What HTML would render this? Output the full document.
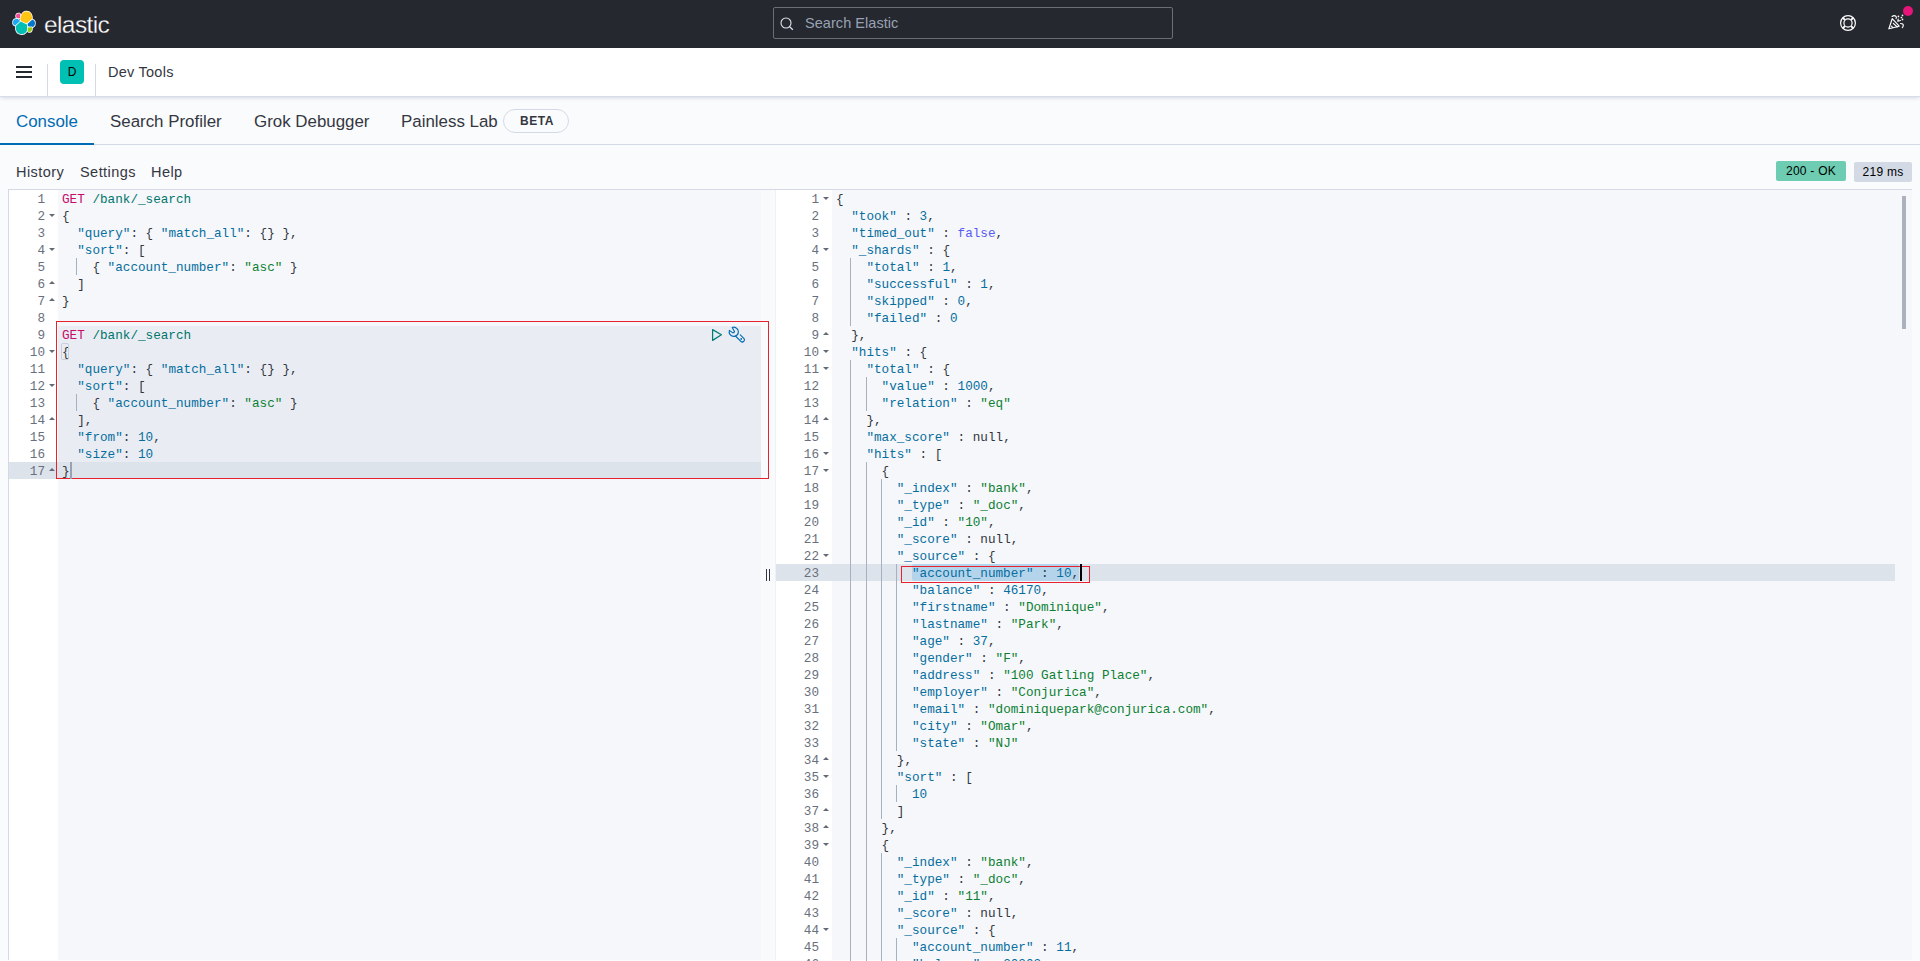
<!DOCTYPE html>
<html><head><meta charset="utf-8">
<style>
*{box-sizing:border-box;margin:0;padding:0}
html,body{width:1920px;height:961px;overflow:hidden;background:#fafbfd;font-family:"Liberation Sans",sans-serif;color:#343741;position:relative}
.abs{position:absolute}
#hdr{position:absolute;left:0;top:0;width:1920px;height:48px;background:#25282f}
#logo-text{position:absolute;left:44px;top:10.5px;font-size:24.5px;line-height:28px;color:#fff;letter-spacing:-0.6px;-webkit-text-stroke:0.3px #25282f}
#search{position:absolute;left:773px;top:7px;width:400px;height:32px;border:1px solid #6a6e75;border-radius:2px;background:#25282f}
#search span{position:absolute;left:31px;top:7px;font-size:14.5px;line-height:16px;letter-spacing:0.05px;color:#98a2b3}
#nav{position:absolute;left:0;top:48px;width:1920px;height:48px;background:#fff;box-shadow:0 1px 0 #d6dce8,0 3px 4px -1px rgba(152,162,179,.4)}
.vsep{position:absolute;top:64px;width:1px;height:32px;background:#d3dae6}
.tab{position:absolute;top:111.6px;font-size:16.9px;line-height:19px;color:#343741;white-space:nowrap}
#tabline{position:absolute;left:0;top:144px;width:1920px;height:1px;background:#d3dae6}
#tabsel{position:absolute;left:0;top:143px;width:94px;height:2px;background:#006bb4}
.tb{position:absolute;top:164px;font-size:14.5px;line-height:16px;color:#343741;white-space:nowrap;letter-spacing:0.45px}
#tbline{position:absolute;left:8px;top:189px;width:1904px;height:1px;background:#d3dae6}
.badge{position:absolute;font-size:12px;line-height:14px;color:#000;white-space:nowrap;text-align:center;border-radius:2px;letter-spacing:0.25px}
.ed{font-family:"Liberation Mono",monospace;font-size:12.667px;line-height:17px}
.ed div{position:absolute}
.gut{background:#fff}
.cbg{background:#f5f7fa}
.blk{background:#e9edf3}
.act{background:#dde3eb}
.ln{text-align:right;color:#69707d;white-space:pre;height:17px;padding-top:1px}
.sel{background:#b4d4ec;border-radius:2px}
.code{white-space:pre;color:#343741;height:17px;padding-top:1px}
.ig{width:1px;height:17px;background:#a7b0be}
.fold{width:0;height:0;border-left:3px solid transparent;border-right:3px solid transparent}
.fold.d{border-top:3px solid #646a75}
.fold.u{border-bottom:3px solid #646a75}
.m{color:#c80a68}.u{color:#00756c}.k{color:#066e9e}.s{color:#0d7f33}.n{color:#066e9e}.p{color:#343741}.o{color:#343741}.c{color:#585cf6}.nl{color:#343741}
</style></head><body>
<div id="hdr">
  <svg class="abs" style="left:8px;top:8px" width="32" height="32" viewBox="0 0 32 32">
    <g stroke="#fff" stroke-width="1.5" stroke-linejoin="round" paint-order="stroke">
    <path fill="#f04e98" d="M8.2 7 C8.6 5.6 10 5.2 11.6 5.6 L12.3 6.2 L12.4 10 L9.5 10.6 C8.2 10 7.9 8.4 8.2 7Z"/>
    <path fill="#fec514" d="M12.4 13.3 C12.2 9 13.8 4 18.3 3.6 C22 3.4 24.3 6.2 24.1 11.7 L18.7 15.7 Z"/>
    <path fill="#1ba9f5" d="M5 14 C5.2 11.5 7.2 10.7 9.5 10.8 L12.4 13.3 L7.6 17.7 C5.8 17.4 4.8 16 5 14Z"/>
    <path fill="#0077cc" d="M18.9 16.4 L24.1 11.8 C25.8 11.9 27.1 13.4 27 15.4 C26.9 17.8 25.4 19.1 23.6 19.1 C21.6 19.1 19.9 18.1 18.9 16.4Z"/>
    <path fill="#00bfb3" d="M7.8 18 L12.6 13.6 L18.9 16.4 C19.5 19 19.6 22.2 18.2 24 C16.5 26.2 13.5 26.6 11 25.6 C8.4 24.5 7.5 21 7.8 18Z"/>
    <path fill="#93c90e" d="M19.8 19.4 L24 19.3 C24.4 21.8 23.6 23.9 21.6 24.1 C20.5 24.2 19.7 23.4 19.7 22.3Z"/>
    </g>
  </svg>
  <div id="logo-text">elastic</div>
  <div id="search"><svg class="abs" style="left:6px;top:9px" width="14" height="14" viewBox="0 0 14 14"><circle cx="6" cy="6" r="5" fill="none" stroke="#dfe5ef" stroke-width="1.1"/><path d="M9.6 9.6 L12.8 12.8" stroke="#dfe5ef" stroke-width="1.3"/></svg><span>Search Elastic</span></div>
  <svg class="abs" style="left:1839px;top:14px" width="18" height="18" viewBox="0 0 18 18" fill="none" stroke="#fff" stroke-width="1.2">
    <circle cx="9" cy="9" r="7.4"/><circle cx="9" cy="9" r="4.1"/>
    <path stroke-width="1.9" d="M5.9 5.9 L3.9 3.9 M12.1 5.9 L14.1 3.9 M5.9 12.1 L3.9 14.1 M12.1 12.1 L14.1 14.1"/>
  </svg>
  <svg class="abs" style="left:1884px;top:12px" width="24" height="22" viewBox="0 0 24 22" fill="none" stroke="#fff" stroke-width="1.15" stroke-linecap="round" stroke-linejoin="round">
    <path d="M8.2 6.7 L15.2 14.2 L4.9 16.8 Z"/>
    <path d="M9.3 11.3 L13.3 15 M7.5 14.1 L8.6 15.4"/>
    <path d="M8.1 4.5 Q10.2 2.6 12 4.4 Q12.7 5.4 12.1 6.6"/>
    <path d="M14.2 7 L13.8 9.3 L16.4 8.5"/>
    <path d="M16.6 11.5 Q19.3 11.4 19.3 13.5 Q19.1 14.9 18.3 15.6"/>
    <g fill="#fff" stroke="none"><circle cx="14.4" cy="4.4" r=".85"/><circle cx="18.5" cy="3.4" r=".85"/><circle cx="17.4" cy="5.5" r=".85"/><circle cx="18.5" cy="7.4" r=".85"/></g>
  </svg>
  <div class="abs" style="left:1903px;top:6px;width:10px;height:10px;border-radius:5px;background:#e5157a"></div>
</div>
<div id="nav">
  <div class="abs" style="left:16px;top:18px;width:16px;height:2px;background:#25282f"></div>
  <div class="abs" style="left:16px;top:23px;width:16px;height:2px;background:#25282f"></div>
  <div class="abs" style="left:16px;top:28px;width:16px;height:2px;background:#25282f"></div>
  <div class="abs" style="left:47px;top:16px;width:1px;height:32px;background:#d3dae6"></div>
  <div class="abs" style="left:60px;top:12px;width:24px;height:24px;border-radius:4px;background:#00bfb3;color:#000;font-size:12px;line-height:24px;text-align:center">D</div>
  <div class="abs" style="left:95px;top:16px;width:1px;height:32px;background:#d3dae6"></div>
  <div class="abs" style="left:108px;top:16px;font-size:14.5px;line-height:16px;letter-spacing:0.25px;color:#343741">Dev Tools</div>
</div>
<div class="tab" style="left:16px;color:#006bb4">Console</div>
<div class="tab" style="left:110px">Search Profiler</div>
<div class="tab" style="left:254px">Grok Debugger</div>
<div class="tab" style="left:401px">Painless Lab</div>
<div class="abs" style="left:503px;top:109px;width:66px;height:24px;border:1px solid #d3dae6;border-radius:12px;font-size:12px;font-weight:bold;line-height:22px;text-align:center;letter-spacing:0.6px;padding-left:2px;color:#343741">BETA</div>
<div id="tabline"></div><div id="tabsel"></div>
<div class="tb" style="left:16px">History</div>
<div class="tb" style="left:80px">Settings</div>
<div class="tb" style="left:151px">Help</div>
<div class="badge" style="left:1776px;top:161px;width:70px;height:20px;line-height:20px;background:#6dccb1">200 - OK</div>
<div class="badge" style="left:1854px;top:162px;width:58px;height:20px;line-height:20px;background:#d3dae6">219 ms</div>
<div id="edL" class="ed"><div class="gut" style="left:9px;top:190px;width:49px;height:770px"></div>
<div class="cbg" style="left:58px;top:190px;width:703px;height:770px"></div>
<div class="blk" style="left:58px;top:326px;width:703px;height:153px"></div>
<div class="act" style="left:9px;top:462px;width:752px;height:17px"></div>
<div class="ln" style="left:9px;top:190px;width:36px">1</div>
<div class="code" style="left:62px;top:190px"><span class="m">GET</span> <span class="u">/bank/_search</span></div>
<div class="ln" style="left:9px;top:207px;width:36px">2</div>
<div class="fold d" style="left:48.5px;top:214px"></div>
<div class="code" style="left:62px;top:207px"><span class="p">{</span></div>
<div class="ln" style="left:9px;top:224px;width:36px">3</div>
<div class="code" style="left:62px;top:224px">  <span class="k">&quot;query&quot;</span><span class="o">:</span> <span class="p">{</span> <span class="k">&quot;match_all&quot;</span><span class="o">:</span> <span class="p">{</span><span class="p">}</span> <span class="p">}</span><span class="o">,</span></div>
<div class="ln" style="left:9px;top:241px;width:36px">4</div>
<div class="fold d" style="left:48.5px;top:248px"></div>
<div class="code" style="left:62px;top:241px">  <span class="k">&quot;sort&quot;</span><span class="o">:</span> <span class="p">[</span></div>
<div class="ln" style="left:9px;top:258px;width:36px">5</div>
<div class="ig" style="left:76px;top:258px"></div>
<div class="code" style="left:62px;top:258px">    <span class="p">{</span> <span class="k">&quot;account_number&quot;</span><span class="o">:</span> <span class="s">&quot;asc&quot;</span> <span class="p">}</span></div>
<div class="ln" style="left:9px;top:275px;width:36px">6</div>
<div class="fold u" style="left:48.5px;top:281px"></div>
<div class="code" style="left:62px;top:275px">  <span class="p">]</span></div>
<div class="ln" style="left:9px;top:292px;width:36px">7</div>
<div class="fold u" style="left:48.5px;top:298px"></div>
<div class="code" style="left:62px;top:292px"><span class="p">}</span></div>
<div class="ln" style="left:9px;top:309px;width:36px">8</div>
<div class="code" style="left:62px;top:309px"></div>
<div class="ln" style="left:9px;top:326px;width:36px">9</div>
<div class="code" style="left:62px;top:326px"><span class="m">GET</span> <span class="u">/bank/_search</span></div>
<div class="ln" style="left:9px;top:343px;width:36px">10</div>
<div class="fold d" style="left:48.5px;top:350px"></div>
<div class="code" style="left:62px;top:343px"><span class="p">{</span></div>
<div class="ln" style="left:9px;top:360px;width:36px">11</div>
<div class="code" style="left:62px;top:360px">  <span class="k">&quot;query&quot;</span><span class="o">:</span> <span class="p">{</span> <span class="k">&quot;match_all&quot;</span><span class="o">:</span> <span class="p">{</span><span class="p">}</span> <span class="p">}</span><span class="o">,</span></div>
<div class="ln" style="left:9px;top:377px;width:36px">12</div>
<div class="fold d" style="left:48.5px;top:384px"></div>
<div class="code" style="left:62px;top:377px">  <span class="k">&quot;sort&quot;</span><span class="o">:</span> <span class="p">[</span></div>
<div class="ln" style="left:9px;top:394px;width:36px">13</div>
<div class="ig" style="left:76px;top:394px"></div>
<div class="code" style="left:62px;top:394px">    <span class="p">{</span> <span class="k">&quot;account_number&quot;</span><span class="o">:</span> <span class="s">&quot;asc&quot;</span> <span class="p">}</span></div>
<div class="ln" style="left:9px;top:411px;width:36px">14</div>
<div class="fold u" style="left:48.5px;top:417px"></div>
<div class="code" style="left:62px;top:411px">  <span class="p">]</span><span class="o">,</span></div>
<div class="ln" style="left:9px;top:428px;width:36px">15</div>
<div class="code" style="left:62px;top:428px">  <span class="k">&quot;from&quot;</span><span class="o">:</span> <span class="n">10</span><span class="o">,</span></div>
<div class="ln" style="left:9px;top:445px;width:36px">16</div>
<div class="code" style="left:62px;top:445px">  <span class="k">&quot;size&quot;</span><span class="o">:</span> <span class="n">10</span></div>
<div class="ln" style="left:9px;top:462px;width:36px">17</div>
<div class="fold u" style="left:48.5px;top:468px"></div>
<div class="code" style="left:62px;top:462px"><span class="p">}</span></div></div>
<div id="edR" class="ed"><div class="gut" style="left:776px;top:190px;width:56px;height:770px"></div>
<div class="cbg" style="left:832px;top:190px;width:1080px;height:770px"></div>
<div class="act" style="left:776px;top:564px;width:1119px;height:17px"></div>
<div class="sel" style="left:912px;top:564px;width:167px;height:17px"></div>
<div class="ln" style="left:776px;top:190px;width:43px">1</div>
<div class="fold d" style="left:822.5px;top:197px"></div>
<div class="code" style="left:836px;top:190px"><span class="p">{</span></div>
<div class="ln" style="left:776px;top:207px;width:43px">2</div>
<div class="code" style="left:836px;top:207px">  <span class="k">&quot;took&quot;</span> <span class="o">:</span> <span class="n">3</span><span class="o">,</span></div>
<div class="ln" style="left:776px;top:224px;width:43px">3</div>
<div class="code" style="left:836px;top:224px">  <span class="k">&quot;timed_out&quot;</span> <span class="o">:</span> <span class="c">false</span><span class="o">,</span></div>
<div class="ln" style="left:776px;top:241px;width:43px">4</div>
<div class="fold d" style="left:822.5px;top:248px"></div>
<div class="code" style="left:836px;top:241px">  <span class="k">&quot;_shards&quot;</span> <span class="o">:</span> <span class="p">{</span></div>
<div class="ln" style="left:776px;top:258px;width:43px">5</div>
<div class="ig" style="left:850px;top:258px"></div>
<div class="code" style="left:836px;top:258px">    <span class="k">&quot;total&quot;</span> <span class="o">:</span> <span class="n">1</span><span class="o">,</span></div>
<div class="ln" style="left:776px;top:275px;width:43px">6</div>
<div class="ig" style="left:850px;top:275px"></div>
<div class="code" style="left:836px;top:275px">    <span class="k">&quot;successful&quot;</span> <span class="o">:</span> <span class="n">1</span><span class="o">,</span></div>
<div class="ln" style="left:776px;top:292px;width:43px">7</div>
<div class="ig" style="left:850px;top:292px"></div>
<div class="code" style="left:836px;top:292px">    <span class="k">&quot;skipped&quot;</span> <span class="o">:</span> <span class="n">0</span><span class="o">,</span></div>
<div class="ln" style="left:776px;top:309px;width:43px">8</div>
<div class="ig" style="left:850px;top:309px"></div>
<div class="code" style="left:836px;top:309px">    <span class="k">&quot;failed&quot;</span> <span class="o">:</span> <span class="n">0</span></div>
<div class="ln" style="left:776px;top:326px;width:43px">9</div>
<div class="fold u" style="left:822.5px;top:332px"></div>
<div class="code" style="left:836px;top:326px">  <span class="p">}</span><span class="o">,</span></div>
<div class="ln" style="left:776px;top:343px;width:43px">10</div>
<div class="fold d" style="left:822.5px;top:350px"></div>
<div class="code" style="left:836px;top:343px">  <span class="k">&quot;hits&quot;</span> <span class="o">:</span> <span class="p">{</span></div>
<div class="ln" style="left:776px;top:360px;width:43px">11</div>
<div class="fold d" style="left:822.5px;top:367px"></div>
<div class="ig" style="left:850px;top:360px"></div>
<div class="code" style="left:836px;top:360px">    <span class="k">&quot;total&quot;</span> <span class="o">:</span> <span class="p">{</span></div>
<div class="ln" style="left:776px;top:377px;width:43px">12</div>
<div class="ig" style="left:850px;top:377px"></div>
<div class="ig" style="left:866px;top:377px"></div>
<div class="code" style="left:836px;top:377px">      <span class="k">&quot;value&quot;</span> <span class="o">:</span> <span class="n">1000</span><span class="o">,</span></div>
<div class="ln" style="left:776px;top:394px;width:43px">13</div>
<div class="ig" style="left:850px;top:394px"></div>
<div class="ig" style="left:866px;top:394px"></div>
<div class="code" style="left:836px;top:394px">      <span class="k">&quot;relation&quot;</span> <span class="o">:</span> <span class="s">&quot;eq&quot;</span></div>
<div class="ln" style="left:776px;top:411px;width:43px">14</div>
<div class="fold u" style="left:822.5px;top:417px"></div>
<div class="ig" style="left:850px;top:411px"></div>
<div class="code" style="left:836px;top:411px">    <span class="p">}</span><span class="o">,</span></div>
<div class="ln" style="left:776px;top:428px;width:43px">15</div>
<div class="ig" style="left:850px;top:428px"></div>
<div class="code" style="left:836px;top:428px">    <span class="k">&quot;max_score&quot;</span> <span class="o">:</span> <span class="nl">null</span><span class="o">,</span></div>
<div class="ln" style="left:776px;top:445px;width:43px">16</div>
<div class="fold d" style="left:822.5px;top:452px"></div>
<div class="ig" style="left:850px;top:445px"></div>
<div class="code" style="left:836px;top:445px">    <span class="k">&quot;hits&quot;</span> <span class="o">:</span> <span class="p">[</span></div>
<div class="ln" style="left:776px;top:462px;width:43px">17</div>
<div class="fold d" style="left:822.5px;top:469px"></div>
<div class="ig" style="left:850px;top:462px"></div>
<div class="ig" style="left:866px;top:462px"></div>
<div class="code" style="left:836px;top:462px">      <span class="p">{</span></div>
<div class="ln" style="left:776px;top:479px;width:43px">18</div>
<div class="ig" style="left:850px;top:479px"></div>
<div class="ig" style="left:866px;top:479px"></div>
<div class="ig" style="left:881px;top:479px"></div>
<div class="code" style="left:836px;top:479px">        <span class="k">&quot;_index&quot;</span> <span class="o">:</span> <span class="s">&quot;bank&quot;</span><span class="o">,</span></div>
<div class="ln" style="left:776px;top:496px;width:43px">19</div>
<div class="ig" style="left:850px;top:496px"></div>
<div class="ig" style="left:866px;top:496px"></div>
<div class="ig" style="left:881px;top:496px"></div>
<div class="code" style="left:836px;top:496px">        <span class="k">&quot;_type&quot;</span> <span class="o">:</span> <span class="s">&quot;_doc&quot;</span><span class="o">,</span></div>
<div class="ln" style="left:776px;top:513px;width:43px">20</div>
<div class="ig" style="left:850px;top:513px"></div>
<div class="ig" style="left:866px;top:513px"></div>
<div class="ig" style="left:881px;top:513px"></div>
<div class="code" style="left:836px;top:513px">        <span class="k">&quot;_id&quot;</span> <span class="o">:</span> <span class="s">&quot;10&quot;</span><span class="o">,</span></div>
<div class="ln" style="left:776px;top:530px;width:43px">21</div>
<div class="ig" style="left:850px;top:530px"></div>
<div class="ig" style="left:866px;top:530px"></div>
<div class="ig" style="left:881px;top:530px"></div>
<div class="code" style="left:836px;top:530px">        <span class="k">&quot;_score&quot;</span> <span class="o">:</span> <span class="nl">null</span><span class="o">,</span></div>
<div class="ln" style="left:776px;top:547px;width:43px">22</div>
<div class="fold d" style="left:822.5px;top:554px"></div>
<div class="ig" style="left:850px;top:547px"></div>
<div class="ig" style="left:866px;top:547px"></div>
<div class="ig" style="left:881px;top:547px"></div>
<div class="code" style="left:836px;top:547px">        <span class="k">&quot;_source&quot;</span> <span class="o">:</span> <span class="p">{</span></div>
<div class="ln" style="left:776px;top:564px;width:43px">23</div>
<div class="ig" style="left:850px;top:564px"></div>
<div class="ig" style="left:866px;top:564px"></div>
<div class="ig" style="left:881px;top:564px"></div>
<div class="ig" style="left:896px;top:564px"></div>
<div class="code" style="left:836px;top:564px">          <span class="k">&quot;account_number&quot;</span> <span class="o">:</span> <span class="n">10</span><span class="o">,</span></div>
<div class="ln" style="left:776px;top:581px;width:43px">24</div>
<div class="ig" style="left:850px;top:581px"></div>
<div class="ig" style="left:866px;top:581px"></div>
<div class="ig" style="left:881px;top:581px"></div>
<div class="ig" style="left:896px;top:581px"></div>
<div class="code" style="left:836px;top:581px">          <span class="k">&quot;balance&quot;</span> <span class="o">:</span> <span class="n">46170</span><span class="o">,</span></div>
<div class="ln" style="left:776px;top:598px;width:43px">25</div>
<div class="ig" style="left:850px;top:598px"></div>
<div class="ig" style="left:866px;top:598px"></div>
<div class="ig" style="left:881px;top:598px"></div>
<div class="ig" style="left:896px;top:598px"></div>
<div class="code" style="left:836px;top:598px">          <span class="k">&quot;firstname&quot;</span> <span class="o">:</span> <span class="s">&quot;Dominique&quot;</span><span class="o">,</span></div>
<div class="ln" style="left:776px;top:615px;width:43px">26</div>
<div class="ig" style="left:850px;top:615px"></div>
<div class="ig" style="left:866px;top:615px"></div>
<div class="ig" style="left:881px;top:615px"></div>
<div class="ig" style="left:896px;top:615px"></div>
<div class="code" style="left:836px;top:615px">          <span class="k">&quot;lastname&quot;</span> <span class="o">:</span> <span class="s">&quot;Park&quot;</span><span class="o">,</span></div>
<div class="ln" style="left:776px;top:632px;width:43px">27</div>
<div class="ig" style="left:850px;top:632px"></div>
<div class="ig" style="left:866px;top:632px"></div>
<div class="ig" style="left:881px;top:632px"></div>
<div class="ig" style="left:896px;top:632px"></div>
<div class="code" style="left:836px;top:632px">          <span class="k">&quot;age&quot;</span> <span class="o">:</span> <span class="n">37</span><span class="o">,</span></div>
<div class="ln" style="left:776px;top:649px;width:43px">28</div>
<div class="ig" style="left:850px;top:649px"></div>
<div class="ig" style="left:866px;top:649px"></div>
<div class="ig" style="left:881px;top:649px"></div>
<div class="ig" style="left:896px;top:649px"></div>
<div class="code" style="left:836px;top:649px">          <span class="k">&quot;gender&quot;</span> <span class="o">:</span> <span class="s">&quot;F&quot;</span><span class="o">,</span></div>
<div class="ln" style="left:776px;top:666px;width:43px">29</div>
<div class="ig" style="left:850px;top:666px"></div>
<div class="ig" style="left:866px;top:666px"></div>
<div class="ig" style="left:881px;top:666px"></div>
<div class="ig" style="left:896px;top:666px"></div>
<div class="code" style="left:836px;top:666px">          <span class="k">&quot;address&quot;</span> <span class="o">:</span> <span class="s">&quot;100 Gatling Place&quot;</span><span class="o">,</span></div>
<div class="ln" style="left:776px;top:683px;width:43px">30</div>
<div class="ig" style="left:850px;top:683px"></div>
<div class="ig" style="left:866px;top:683px"></div>
<div class="ig" style="left:881px;top:683px"></div>
<div class="ig" style="left:896px;top:683px"></div>
<div class="code" style="left:836px;top:683px">          <span class="k">&quot;employer&quot;</span> <span class="o">:</span> <span class="s">&quot;Conjurica&quot;</span><span class="o">,</span></div>
<div class="ln" style="left:776px;top:700px;width:43px">31</div>
<div class="ig" style="left:850px;top:700px"></div>
<div class="ig" style="left:866px;top:700px"></div>
<div class="ig" style="left:881px;top:700px"></div>
<div class="ig" style="left:896px;top:700px"></div>
<div class="code" style="left:836px;top:700px">          <span class="k">&quot;email&quot;</span> <span class="o">:</span> <span class="s">&quot;dominiquepark@conjurica.com&quot;</span><span class="o">,</span></div>
<div class="ln" style="left:776px;top:717px;width:43px">32</div>
<div class="ig" style="left:850px;top:717px"></div>
<div class="ig" style="left:866px;top:717px"></div>
<div class="ig" style="left:881px;top:717px"></div>
<div class="ig" style="left:896px;top:717px"></div>
<div class="code" style="left:836px;top:717px">          <span class="k">&quot;city&quot;</span> <span class="o">:</span> <span class="s">&quot;Omar&quot;</span><span class="o">,</span></div>
<div class="ln" style="left:776px;top:734px;width:43px">33</div>
<div class="ig" style="left:850px;top:734px"></div>
<div class="ig" style="left:866px;top:734px"></div>
<div class="ig" style="left:881px;top:734px"></div>
<div class="ig" style="left:896px;top:734px"></div>
<div class="code" style="left:836px;top:734px">          <span class="k">&quot;state&quot;</span> <span class="o">:</span> <span class="s">&quot;NJ&quot;</span></div>
<div class="ln" style="left:776px;top:751px;width:43px">34</div>
<div class="fold u" style="left:822.5px;top:757px"></div>
<div class="ig" style="left:850px;top:751px"></div>
<div class="ig" style="left:866px;top:751px"></div>
<div class="ig" style="left:881px;top:751px"></div>
<div class="code" style="left:836px;top:751px">        <span class="p">}</span><span class="o">,</span></div>
<div class="ln" style="left:776px;top:768px;width:43px">35</div>
<div class="fold d" style="left:822.5px;top:775px"></div>
<div class="ig" style="left:850px;top:768px"></div>
<div class="ig" style="left:866px;top:768px"></div>
<div class="ig" style="left:881px;top:768px"></div>
<div class="code" style="left:836px;top:768px">        <span class="k">&quot;sort&quot;</span> <span class="o">:</span> <span class="p">[</span></div>
<div class="ln" style="left:776px;top:785px;width:43px">36</div>
<div class="ig" style="left:850px;top:785px"></div>
<div class="ig" style="left:866px;top:785px"></div>
<div class="ig" style="left:881px;top:785px"></div>
<div class="ig" style="left:896px;top:785px"></div>
<div class="code" style="left:836px;top:785px">          <span class="n">10</span></div>
<div class="ln" style="left:776px;top:802px;width:43px">37</div>
<div class="fold u" style="left:822.5px;top:808px"></div>
<div class="ig" style="left:850px;top:802px"></div>
<div class="ig" style="left:866px;top:802px"></div>
<div class="ig" style="left:881px;top:802px"></div>
<div class="code" style="left:836px;top:802px">        <span class="p">]</span></div>
<div class="ln" style="left:776px;top:819px;width:43px">38</div>
<div class="fold u" style="left:822.5px;top:825px"></div>
<div class="ig" style="left:850px;top:819px"></div>
<div class="ig" style="left:866px;top:819px"></div>
<div class="code" style="left:836px;top:819px">      <span class="p">}</span><span class="o">,</span></div>
<div class="ln" style="left:776px;top:836px;width:43px">39</div>
<div class="fold d" style="left:822.5px;top:843px"></div>
<div class="ig" style="left:850px;top:836px"></div>
<div class="ig" style="left:866px;top:836px"></div>
<div class="code" style="left:836px;top:836px">      <span class="p">{</span></div>
<div class="ln" style="left:776px;top:853px;width:43px">40</div>
<div class="ig" style="left:850px;top:853px"></div>
<div class="ig" style="left:866px;top:853px"></div>
<div class="ig" style="left:881px;top:853px"></div>
<div class="code" style="left:836px;top:853px">        <span class="k">&quot;_index&quot;</span> <span class="o">:</span> <span class="s">&quot;bank&quot;</span><span class="o">,</span></div>
<div class="ln" style="left:776px;top:870px;width:43px">41</div>
<div class="ig" style="left:850px;top:870px"></div>
<div class="ig" style="left:866px;top:870px"></div>
<div class="ig" style="left:881px;top:870px"></div>
<div class="code" style="left:836px;top:870px">        <span class="k">&quot;_type&quot;</span> <span class="o">:</span> <span class="s">&quot;_doc&quot;</span><span class="o">,</span></div>
<div class="ln" style="left:776px;top:887px;width:43px">42</div>
<div class="ig" style="left:850px;top:887px"></div>
<div class="ig" style="left:866px;top:887px"></div>
<div class="ig" style="left:881px;top:887px"></div>
<div class="code" style="left:836px;top:887px">        <span class="k">&quot;_id&quot;</span> <span class="o">:</span> <span class="s">&quot;11&quot;</span><span class="o">,</span></div>
<div class="ln" style="left:776px;top:904px;width:43px">43</div>
<div class="ig" style="left:850px;top:904px"></div>
<div class="ig" style="left:866px;top:904px"></div>
<div class="ig" style="left:881px;top:904px"></div>
<div class="code" style="left:836px;top:904px">        <span class="k">&quot;_score&quot;</span> <span class="o">:</span> <span class="nl">null</span><span class="o">,</span></div>
<div class="ln" style="left:776px;top:921px;width:43px">44</div>
<div class="fold d" style="left:822.5px;top:928px"></div>
<div class="ig" style="left:850px;top:921px"></div>
<div class="ig" style="left:866px;top:921px"></div>
<div class="ig" style="left:881px;top:921px"></div>
<div class="code" style="left:836px;top:921px">        <span class="k">&quot;_source&quot;</span> <span class="o">:</span> <span class="p">{</span></div>
<div class="ln" style="left:776px;top:938px;width:43px">45</div>
<div class="ig" style="left:850px;top:938px"></div>
<div class="ig" style="left:866px;top:938px"></div>
<div class="ig" style="left:881px;top:938px"></div>
<div class="ig" style="left:896px;top:938px"></div>
<div class="code" style="left:836px;top:938px">          <span class="k">&quot;account_number&quot;</span> <span class="o">:</span> <span class="n">11</span><span class="o">,</span></div>
<div class="ln" style="left:776px;top:955px;width:43px">46</div>
<div class="ig" style="left:850px;top:955px"></div>
<div class="ig" style="left:866px;top:955px"></div>
<div class="ig" style="left:881px;top:955px"></div>
<div class="ig" style="left:896px;top:955px"></div>
<div class="code" style="left:836px;top:955px">          <span class="k">&quot;balance&quot;</span> <span class="o">:</span> <span class="n">20203</span><span class="o">,</span></div></div>
<div id="tbline"></div>
<div class="abs" style="left:8px;top:189px;width:1px;height:771px;background:#d3dae6"></div>
<div class="abs" style="left:761px;top:190px;width:14px;height:770px;background:#f9fafc"></div>
<div class="abs" style="left:775px;top:190px;width:1px;height:770px;background:#eef1f6"></div>
<div class="abs" style="left:766px;top:569px;width:1px;height:12px;background:#343741"></div>
<div class="abs" style="left:769px;top:569px;width:1px;height:12px;background:#343741"></div>
<div class="abs" style="left:56px;top:321px;width:713px;height:158px;border:1px solid #e7222e"></div>
<div class="abs" style="left:70px;top:462px;width:2px;height:17px;background:#98a2b3"></div>
<svg class="abs" style="left:711px;top:328px" width="13" height="14" viewBox="0 0 13 14" fill="none" stroke="#017d73" stroke-width="1.25" stroke-linejoin="round"><path d="M1.6 1.6 L10.4 6.8 L1.6 12.4 Z"/></svg>
<svg class="abs" style="left:726px;top:324px" width="22" height="22" viewBox="0 0 22 22" fill="none" stroke="#006bb4" stroke-width="1.15" stroke-linejoin="round" stroke-linecap="round"><path d="M6.2 3.5 A4.6 4.6 0 1 1 3.4 6.4 L6.5 8.6 Q7.9 9.2 8.5 7.5 Z"/><path d="M9.5 12 L14.8 17.3 A2.12 2.12 0 0 0 17.8 14.3 L14.3 10.8"/><circle cx="15.2" cy="14.9" r=".95" fill="#006bb4" stroke="none"/></svg>
<div class="abs" style="left:1902px;top:196px;width:4px;height:133px;background:#abb2bd"></div>
<div class="abs" style="left:901px;top:566px;width:189px;height:17px;border:1px solid #e7222e"></div>
<div class="abs" style="left:1080px;top:564px;width:2px;height:17px;background:#000"></div>
<div class="abs" style="left:61px;top:343px;width:8px;height:17px;border:1px solid #c9d0dc;border-radius:2px"></div>
